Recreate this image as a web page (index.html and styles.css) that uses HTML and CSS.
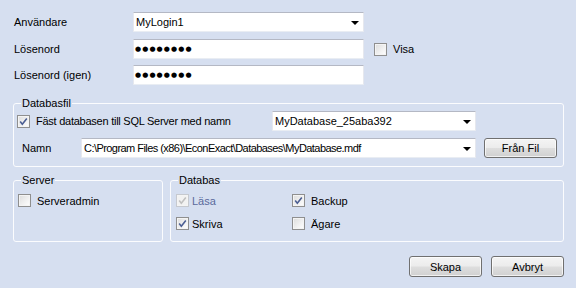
FILE: index.html
```html
<!DOCTYPE html>
<html lang="sv">
<head>
<meta charset="utf-8">
<title>Databas</title>
<link rel="stylesheet" href="styles.css">
</head>
<body>
<div class="form">
  <div class="row r1">
    <span class="lbl">Användare</span>
    <div class="combo w-user"><span class="val">MyLogin1</span><span class="arrow"></span></div>
  </div>
  <div class="row r2">
    <span class="lbl">Lösenord</span>
    <div class="textbox w-user"><span class="pw">●●●●●●●●</span></div>
    <label class="check visa"><span class="box"></span><span>Visa</span></label>
  </div>
  <div class="row r3">
    <span class="lbl">Lösenord (igen)</span>
    <div class="textbox w-user"><span class="pw">●●●●●●●●</span></div>
  </div>

  <div class="group g-file">
    <span class="gtitle">Databasfil</span>
    <div class="grow gr1">
      <label class="check attach"><span class="box"><svg viewBox="0 0 11 11" width="11" height="11"><path d="M2.2 5.6 L4.3 8.2 L8.8 2.4" class="tick"/></svg></span><span class="attach-text">Fäst databasen till SQL Server med namn</span></label>
      <div class="combo w-db"><span class="val">MyDatabase_25aba392</span><span class="arrow"></span></div>
    </div>
    <div class="grow gr2">
      <span class="lbl2">Namn</span>
      <div class="combo w-path"><span class="val path">C:\Program Files (x86)\EconExact\Databases\MyDatabase.mdf</span><span class="arrow"></span></div>
      <button class="btn btn-file">Från Fil</button>
    </div>
  </div>

  <div class="bottom">
    <div class="group g-server">
      <span class="gtitle">Server</span>
      <label class="check"><span class="box"></span><span>Serveradmin</span></label>
    </div>
    <div class="group g-db">
      <span class="gtitle">Databas</span>
      <label class="check tight disabled"><span class="box"><svg viewBox="0 0 11 11" width="11" height="11"><path d="M2.2 5.6 L4.3 8.2 L8.8 2.4" class="tick"/></svg></span><span>Läsa</span></label>
      <label class="check"><span class="box"><svg viewBox="0 0 11 11" width="11" height="11"><path d="M2.2 5.6 L4.3 8.2 L8.8 2.4" class="tick"/></svg></span><span>Backup</span></label>
      <label class="check tight"><span class="box"><svg viewBox="0 0 11 11" width="11" height="11"><path d="M2.2 5.6 L4.3 8.2 L8.8 2.4" class="tick"/></svg></span><span>Skriva</span></label>
      <label class="check"><span class="box"></span><span>Ägare</span></label>
    </div>
  </div>

  <div class="actions">
    <button class="btn">Skapa</button>
    <button class="btn">Avbryt</button>
  </div>
</div>
</body>
</html>
```

FILE: styles.css
```css
html, body {
  margin: 0;
  padding: 0;
  background: #d6dff0;
}
body {
  font-family: "Liberation Sans", Arial, sans-serif;
  font-size: 11px;
  color: #000;
  width: 576px;
  height: 288px;
  overflow: hidden;
}
.form {
  width: 551px;
  padding: 12px 0 0 13px;
}
.row {
  display: flex;
  align-items: center;
  height: 20px;
}
.r2 { margin-top: 7px; }
.r3 { margin-top: 6px; }
.lbl {
  width: 120px;
  padding-left: 1px;
  box-sizing: border-box;
}
.combo, .textbox {
  box-sizing: border-box;
  height: 20px;
  background: #fff;
  border: 1px solid;
  border-color: #b4b8c4 #e6e8ee #e9edf3 #e6e8ee;
  display: flex;
  align-items: center;
  padding-left: 2px;
  padding-right: 4px;
  white-space: nowrap;
  overflow: hidden;
}
.combo .val { flex: 1; overflow: hidden; }
.path { letter-spacing: -0.55px; }
.attach-text { letter-spacing: -0.25px; }
.arrow {
  width: 0;
  height: 0;
  border-left: 4px solid transparent;
  border-right: 4px solid transparent;
  border-top: 4px solid #000;
  margin-top: 1px;
}
.w-user { width: 231px; }
.w-db { width: 204px; }
.w-path { width: 395px; }
.pw {
  font-family: "DejaVu Sans", sans-serif;
  font-size: 7px;
  letter-spacing: 1.1px;
  font-weight: bold;
  margin-left: -1px;
}

.check {
  display: flex;
  align-items: center;
  height: 17px;
}
.box {
  box-sizing: border-box;
  width: 13px;
  height: 13px;
  border: 1px solid #8f8f8f;
  background: linear-gradient(135deg, #dcdcdc 0%, #f0f0f0 55%, #ffffff 100%);
  box-shadow: inset 0 0 0 1px #f4f4f4;
  margin-right: 6px;
  display: flex;
  align-items: center;
  justify-content: center;
}
.tick {
  fill: none;
  stroke: #4b5e93;
  stroke-width: 1.6;
}
.tight .box { margin-right: 3px; }
.disabled { color: #5a6a9c; }
.disabled .box { border-color: #c6c9cf; background: #f2f2f2; }
.disabled .tick { stroke: #c0c0c0; }
.visa { margin-left: 10px; }

.group {
  position: relative;
  box-sizing: border-box;
  border: 1px solid #fbfcfe;
  border-radius: 3px;
}
.gtitle {
  position: absolute;
  top: -7px;
  left: 7px;
  line-height: 13px;
  padding: 0 1px;
  background: #d6dff0;
}
.g-file {
  margin-top: 18px;
  width: 551px;
  padding: 7px 0 8px 3px;
}
.grow {
  display: flex;
  align-items: center;
  height: 20px;
}
.gr2 { margin-top: 7px; }
.attach { width: 255px; height: 20px; }
.lbl2 {
  width: 64px;
  padding-left: 5px;
  box-sizing: border-box;
}
.btn {
  box-sizing: border-box;
  font-family: "Liberation Sans", Arial, sans-serif;
  font-size: 11px;
  color: #000;
  width: 73px;
  height: 21px;
  padding: 0;
  border: 1px solid #707070;
  border-radius: 3px;
  background: linear-gradient(#f4f4f4 0%, #ececec 48%, #dedede 52%, #d0d0d0 100%);
  box-shadow: inset 0 0 0 1px rgba(255,255,255,0.7);
}
.btn-file {
  margin-left: 8px;
  height: 20px;
}

.bottom {
  display: flex;
  margin-top: 13px;
}
.g-server {
  width: 150px;
  height: 62px;
  padding: 11px 0 0 4px;
}
.g-db {
  width: 394px;
  height: 62px;
  margin-left: 7px;
  padding: 11px 0 0 5px;
  display: grid;
  grid-template-columns: 116px auto;
  grid-auto-rows: 17px;
  row-gap: 6px;
  align-content: start;
}
.actions {
  display: flex;
  justify-content: flex-end;
  gap: 9px;
  margin-top: 14px;
}
```
